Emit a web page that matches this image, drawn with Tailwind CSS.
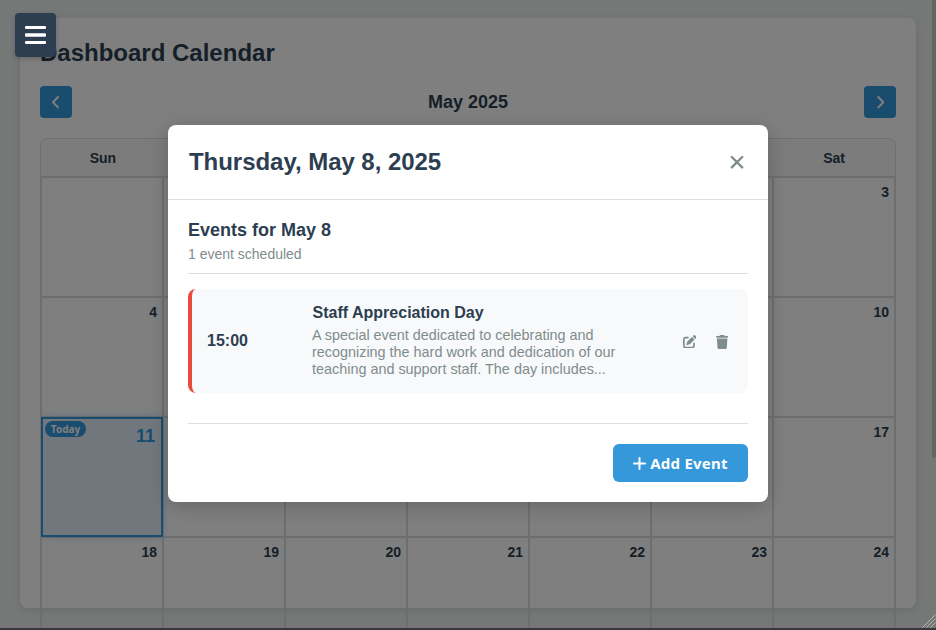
<!DOCTYPE html>
<html lang="en">
<head>
<meta charset="utf-8">
<title>Dashboard Calendar</title>
<script src="https://cdn.jsdelivr.net/npm/@tailwindcss/browser@4"></script>
</head>
<body class="relative h-[630px] w-[936px] overflow-hidden bg-[#ecf0f1] font-['Liberation_Sans',Arial,sans-serif] text-[#2c3e50]">

<main class="h-[630px] overflow-hidden px-5 pt-[18px]">
  <section class="h-[590px] w-[896px] rounded-[8px] bg-white p-5 shadow-[0_2px_10px_rgba(0,0,0,0.1)]">
    <h1 class="h-[30px] text-[24px] leading-[30px] font-bold">Dashboard Calendar</h1>
    <div class="mt-[18px] flex h-8 items-center justify-between">
      <button class="flex size-8 items-center justify-center rounded-[4px] bg-[#3498db]" aria-label="Previous month">
        <svg class="h-4 w-4" viewBox="0 0 16 16" fill="none" stroke="#fff" stroke-width="2" stroke-linecap="round" stroke-linejoin="round"><path d="M10 3 L5 8.200 L10 13.400"/></svg>
      </button>
      <h2 class="text-[18px] leading-6 font-bold">May 2025</h2>
      <button class="flex size-8 items-center justify-center rounded-[4px] bg-[#3498db]" aria-label="Next month">
        <svg class="h-4 w-4" viewBox="0 0 16 16" fill="none" stroke="#fff" stroke-width="2" stroke-linecap="round" stroke-linejoin="round"><path d="M6.300 3 L11.300 8.200 L6.300 13.400"/></svg>
      </button>
    </div>
    <div class="mt-5 h-[492px] overflow-hidden rounded-t-[8px] border border-b-0 border-[#ddd]">
      <div class="grid h-[38px] grid-cols-7 border-b border-[#ddd] bg-[#f8f9fa] pl-px text-center text-[14px] leading-[39px] font-bold">
        <div>Sun</div><div>Mon</div><div>Tue</div><div>Wed</div><div>Thu</div><div>Fri</div><div>Sat</div>
      </div>
      <div class="grid auto-rows-[120px] grid-cols-7 text-right text-[14px] leading-4 font-bold *:border *:border-[#ddd] *:px-[5px] *:py-[6px]">
        <div></div><div></div><div></div><div></div><div>1</div><div>2</div><div>3</div>
        <div>4</div><div>5</div><div>6</div><div>7</div><div>8</div><div>9</div><div>10</div>
        <div class="relative border-2! border-[#3498db]! bg-[#e1f0fa] px-[6px]! pt-[7px]! text-[18px] leading-5 text-[#3498db] shadow-[0_0_8px_rgba(52,152,219,0.3)]">
          <span class="absolute top-[2px] left-[2px] flex h-4 w-[41px] items-center justify-center rounded-full bg-[#3498db] font-['Noto_Sans',sans-serif] text-[10px] leading-4 font-bold text-white">Today</span>11</div>
        <div>12</div><div>13</div><div>14</div><div>15</div><div>16</div><div>17</div>
        <div>18</div><div>19</div><div>20</div><div>21</div><div>22</div><div>23</div><div>24</div>
      </div>
    </div>
  </section>
</main>

<div class="absolute top-0 right-0 h-[458px] w-1 rounded-b-[2px] bg-[#c8c8c8]"></div>

<div class="absolute inset-0 flex justify-center bg-black/50 pt-[125px]">
  <div class="h-[377px] w-[600px] rounded-[8px] bg-white shadow-[0_4px_20px_rgba(0,0,0,0.2)]">
    <header class="flex h-[75px] items-center justify-between border-b border-[#ddd] pr-[24px] pl-[21px]">
      <h2 class="text-[24px] leading-7 font-bold tracking-[-0.04px]">Thursday, May 8, 2025</h2>
      <svg class="size-[14px]" viewBox="0 0 14 14" fill="none" stroke="#7f8c8d" stroke-width="2.3" stroke-linecap="round"><path d="M1.8 2 L12.2 12.4 M12.2 2 L1.8 12.4"/></svg>
    </header>
    <div class="px-5 pt-5">
      <h3 class="text-[18px] leading-5 font-bold">Events for May 8</h3>
      <p class="mt-[6px] h-[28px] border-b border-[#ddd] text-[14px] leading-[17px] text-[#7f8c8d]">1 event scheduled</p>
      <article class="mt-[15px] flex h-[104px] items-center rounded-[8px] border-l-4 border-[#e74c3c] bg-[#f8f9fa] pr-5 pl-[15px]">
        <div class="w-[105px] text-[16px] font-bold">15:00</div>
        <div class="w-[330px]">
          <h4 class="pl-[0.600px] text-[16px] leading-[18px] font-bold">Staff Appreciation Day</h4>
          <p class="mt-[5px] text-[14.4px] leading-[17px] whitespace-nowrap text-[#7f8c8d]">A special event dedicated to celebrating and<br>recognizing the hard work and dedication of our<br>teaching and support staff. The day includes...</p>
        </div>
        <div class="ml-auto flex items-center gap-[19.500px] pt-px">
          <svg class="size-[13.500px]" viewBox="0 0 512 512" fill="#7f8c8d"><path d="M471.600 21.700c-21.900-21.900-57.300-21.900-79.200 0L362.300 51.700l97.900 97.900 30.100-30.100c21.900-21.900 21.900-57.300 0-79.200L471.600 21.700zm-299.200 220c-6.100 6.100-10.800 13.600-13.500 21.900l-29.600 88.800c-2.900 8.600-.6 18.100 5.800 24.600s15.900 8.700 24.600 5.800l88.800-29.600c8.200-2.700 15.700-7.400 21.900-13.500L437.700 172.300 339.700 74.300 172.400 241.700zM96 64C43 64 0 107 0 160V416c0 53 43 96 96 96H352c53 0 96-43 96-96V320c0-17.700-14.300-32-32-32s-32 14.300-32 32v96c0 17.700-14.300 32-32 32H96c-17.700 0-32-14.300-32-32V160c0-17.700 14.300-32 32-32h96c17.700 0 32-14.300 32-32s-14.300-32-32-32H96z"/></svg>
          <svg class="h-[14px] w-[12.25px]" viewBox="0 0 448 512" fill="#7f8c8d"><path d="M135.200 17.700L128 32H32C14.300 32 0 46.300 0 64S14.300 96 32 96H416c17.700 0 32-14.300 32-32s-14.300-32-32-32H320l-7.200-14.300C307.400 6.800 296.300 0 284.200 0H163.800c-12.100 0-23.200 6.800-28.600 17.700zM416 128H32L53.200 467c1.600 25.300 22.600 45 47.900 45H346.900c25.300 0 46.300-19.700 47.900-45L416 128z"/></svg>
        </div>
      </article>
      <footer class="mt-[30px] flex justify-end border-t border-[#ddd] pt-5">
        <button class="flex h-[38px] w-[135px] items-center justify-center gap-[4px] rounded-[6px] bg-[#3498db] font-['Noto_Sans',sans-serif] text-[15px] font-bold tracking-[0.250px] text-white">
          <svg class="size-[13px]" viewBox="0 0 13 13" fill="none" stroke="#fff" stroke-width="2" stroke-linecap="round"><path d="M6.500 1V12M1 6.500H12"/></svg>
          <span>Add Event</span>
        </button>
      </footer>
    </div>
  </div>
</div>

<button class="absolute top-[13px] left-[15px] flex h-[44px] w-[41px] flex-col items-center justify-center rounded-[4px] bg-[#2c3e50] shadow-[0_2px_5px_rgba(0,0,0,0.2)]" aria-label="Menu">
  <svg class="h-[18px] w-[21px]" viewBox="0 0 21 18" fill="#fff"><rect width="21" height="3" rx="1"/><rect y="7.300" width="21" height="3.400" rx="1"/><rect y="15" width="21" height="3" rx="1"/></svg>
</button>

<svg class="absolute right-0 bottom-[2px] h-[14px] w-[14px]" viewBox="0 0 14 14" fill="none" stroke="#b4b6b6" stroke-width="1"><path d="M0.500 13.500L13.500 0.500M4.500 13.500L13.500 4.500M8.500 13.500L13.500 8.500"/></svg>
<div class="absolute bottom-0 left-0 h-[2px] w-full bg-[#38363c]"></div>
</body>
</html>
